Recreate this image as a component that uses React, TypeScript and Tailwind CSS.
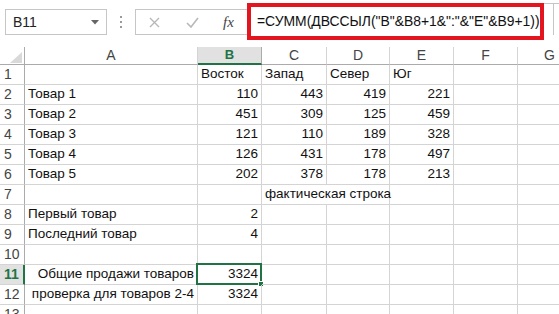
import React from "react";

type Cell = { t?: string; r?: boolean; span?: number };

const rows: Cell[][] = [
  [{}, { t: "Восток" }, { t: "Запад" }, { t: "Север" }, { t: "Юг" }, {}, {}],
  [{ t: "Товар 1" }, { t: "110", r: true }, { t: "443", r: true }, { t: "419", r: true }, { t: "221", r: true }, {}, {}],
  [{ t: "Товар 2" }, { t: "451", r: true }, { t: "309", r: true }, { t: "125", r: true }, { t: "459", r: true }, {}, {}],
  [{ t: "Товар 3" }, { t: "121", r: true }, { t: "110", r: true }, { t: "189", r: true }, { t: "328", r: true }, {}, {}],
  [{ t: "Товар 4" }, { t: "126", r: true }, { t: "431", r: true }, { t: "178", r: true }, { t: "497", r: true }, {}, {}],
  [{ t: "Товар 5" }, { t: "202", r: true }, { t: "378", r: true }, { t: "178", r: true }, { t: "213", r: true }, {}, {}],
  [{}, {}, { t: "фактическая строка", span: 2 }, {}, {}, {}],
  [{ t: "Первый товар" }, { t: "2", r: true }, {}, {}, {}, {}, {}],
  [{ t: "Последний товар" }, { t: "4", r: true }, {}, {}, {}, {}, {}],
  [{}, {}, {}, {}, {}, {}, {}],
  [{ t: "Общие продажи товаров", r: true }, { t: "3324", r: true }, {}, {}, {}, {}, {}],
  [{ t: "проверка для товаров 2-4", r: true }, { t: "3324", r: true }, {}, {}, {}, {}, {}],
  [{}, {}, {}, {}, {}, {}, {}],
];

const cols = ["A", "B", "C", "D", "E", "F", "G"];
const font = { fontFamily: '"Liberation Sans", Arial, sans-serif' };

export default function App() {
  return (
    <div className="w-[559px] h-[314px] bg-white overflow-hidden relative text-[#111]" style={font}>
      {/* formula bar area */}
      <div className="h-[47px] flex items-start relative">
        <div className="ml-[5px] mt-[9px] w-[102px] h-[26px] border border-[#c6c6c6] flex items-center justify-between pl-[7px] pr-[7px] text-[14px] text-[#222]">
          <span>B11</span>
          <svg width="8" height="5" viewBox="0 0 8 5"><polygon points="0,0 8,0 4,4.5" fill="#666" /></svg>
        </div>
        <div className="ml-[13px] mt-[16px] flex flex-col gap-[3px]">
          <div className="w-[2px] h-[2px] bg-[#9a9a9a]" />
          <div className="w-[2px] h-[2px] bg-[#9a9a9a]" />
          <div className="w-[2px] h-[2px] bg-[#9a9a9a]" />
        </div>
        <div className="ml-[13px] mt-[9px] w-[120px] h-[26px] border border-[#c6c6c6] flex items-center">
          <svg className="ml-[13px]" width="11" height="11" viewBox="0 0 11 11"><path d="M1 1 L10 10 M10 1 L1 10" stroke="#b8b8b8" strokeWidth="1.4" /></svg>
          <svg className="ml-[26px]" width="13" height="11" viewBox="0 0 13 11"><path d="M1 6 L5 10 L12 1" stroke="#b8b8b8" strokeWidth="1.6" fill="none" /></svg>
          <span className="ml-[24px] text-[15px] italic text-[#444]" style={{ fontFamily: '"Liberation Serif", serif' }}>fx</span>
        </div>
        <div className="absolute left-[247px] top-[3px] right-0 h-[32px] border-t border-[#c6c6c6]" />
        <div className="absolute right-[5px] top-[3px] h-[32px] border-r border-[#c6c6c6]" />
        <div className="absolute left-[247px] top-[3px] w-[297px] h-[37px] border-[4px] border-[#e3161f] bg-white flex items-center pl-[6px] text-[13.9px] text-[#111] whitespace-nowrap">
          =СУММ(ДВССЫЛ("B"&amp;B8+1&amp;":"&amp;"E"&amp;B9+1))
        </div>
      </div>

      {/* grid */}
      <div className="grid grid-cols-[25px_173px_64px_65px_63px_64px_64px_64px] text-[13.5px]">
        {/* header row */}
        <div className="h-[18px] border-r border-b border-[#ababab] relative">
          <svg className="absolute left-[10px] top-[5px]" width="12" height="11" viewBox="0 0 12 11"><polygon points="12,0 12,11 0,11" fill="#d9d9d9" /></svg>
        </div>
        {cols.map((c) =>
          c === "B" ? (
            <div key={c} className="h-[18px] bg-[#e1e1e1] border-r border-[#ababab] border-b-2 border-b-[#217346] flex items-center justify-center text-[#217346] font-bold text-[13px]">
              {c}
            </div>
          ) : (
            <div key={c} className="h-[18px] border-r border-b border-r-[#d4d4d4] border-b-[#ababab] flex items-center justify-center text-[#444] text-[14px]">
              {c}
            </div>
          )
        )}

        {rows.map((row, i) => {
          const n = i + 1;
          const sel = n === 11;
          return (
            <React.Fragment key={n}>
              {sel ? (
                <div className="h-[20px] bg-[#e1e1e1] border-b border-b-[#d4d4d4] border-r-2 border-r-[#217346] flex items-center pl-[4px] text-[#217346] font-bold text-[14px]">
                  {n}
                </div>
              ) : (
                <div className="h-[20px] border-b border-b-[#d4d4d4] border-r border-r-[#ababab] flex items-center pl-[4px] text-[#444] text-[14px]">
                  {n}
                </div>
              )}
              {row.map((cell, j) => (
                <div
                  key={j}
                  className={
                    "h-[20px] border-r border-b border-[#d4d4d4] flex items-center px-[3px] whitespace-nowrap relative " +
                    (cell.r ? "justify-end " : "justify-start ") +
                    (cell.span === 2 ? "col-span-2" : "")
                  }
                >
                  {cell.t}
                  {sel && j === 1 && (
                    <div className="absolute left-[-2px] top-[-2px] right-[-1px] bottom-[-1px] border-2 border-[#217346]">
                      <div className="absolute right-[-4px] bottom-[-4px] w-[6px] h-[6px] bg-[#217346] border border-white" />
                    </div>
                  )}
                </div>
              ))}
            </React.Fragment>
          );
        })}
      </div>
    </div>
  );
}
